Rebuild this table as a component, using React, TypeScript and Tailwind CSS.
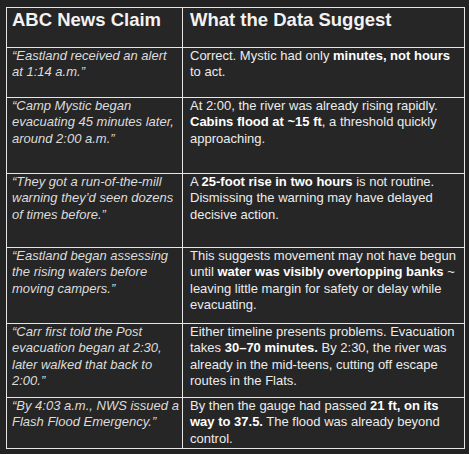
type Row = {
  h: string;
  claim: string[];
  data: React.ReactNode[];
};

const rows: Row[] = [
  {
    h: 'h-[50px]',
    claim: ['“Eastland received an alert', 'at 1:14 a.m.”'],
    data: [
      <>Correct. Mystic had only <b>minutes, not hours</b></>,
      'to act.',
    ],
  },
  {
    h: 'h-[76px]',
    claim: ['“Camp Mystic began', 'evacuating 45 minutes later,', 'around 2:00 a.m.”'],
    data: [
      'At 2:00, the river was already rising rapidly.',
      <><b>Cabins flood at ~15 ft</b>, a threshold quickly</>,
      'approaching.',
    ],
  },
  {
    h: 'h-[74px]',
    claim: ['“They got a run-of-the-mill', 'warning they’d seen dozens', 'of times before.”'],
    data: [
      <>A <b>25-foot rise in two hours</b> is not routine.</>,
      'Dismissing the warning may have delayed',
      'decisive action.',
    ],
  },
  {
    h: 'h-[76px]',
    claim: ['“Eastland began assessing', 'the rising waters before', 'moving campers.”'],
    data: [
      'This suggests movement may not have begun',
      <>until <b>water was visibly overtopping banks</b> ~</>,
      'leaving little margin for safety or delay while',
      'evacuating.',
    ],
  },
  {
    h: 'h-[74px]',
    claim: ['“Carr first told the Post', 'evacuation began at 2:30,', 'later walked that back to', '2:00.”'],
    data: [
      'Either timeline presents problems. Evacuation',
      <>takes <b>30–70 minutes.</b> By 2:30, the river was</>,
      'already in the mid-teens, cutting off escape',
      'routes in the Flats.',
    ],
  },
  {
    h: 'h-[50px]',
    claim: ['“By 4:03 a.m., NWS issued a', 'Flash Flood Emergency.”'],
    data: [
      <>By then the gauge had passed <b>21 ft, on its</b></>,
      <><b>way to 37.5.</b> The flood was already beyond</>,
      'control.',
    ],
  },
];

function Lines({ items }: { items: React.ReactNode[] }) {
  return (
    <>
      {items.map((line, i) => (
        <div key={i} className="whitespace-nowrap">
          {line}
        </div>
      ))}
    </>
  );
}

export default function App() {
  return (
    <div className="h-[454px] w-[469px] bg-[#232323] pl-[6px] pt-[7px] font-['Liberation_Sans',Arial,sans-serif]">
      <div className="w-[459px] border border-[#e6e6e6] bg-[#262626]">
        <div className="flex h-[40px] border-b border-[#e6e6e6] text-[18.5px] font-bold leading-[21px] text-[#f2f2f2]">
          <div className="w-[176px] shrink-0 border-r border-[#e6e6e6] pl-[5px] pt-[1px]">ABC News Claim</div>
          <div className="min-w-0 flex-1 pl-[7px] pt-[1px]">What the Data Suggest</div>
        </div>
        {rows.map((r, i) => (
          <div
            key={i}
            className={`flex ${r.h} ${i < rows.length - 1 ? 'border-b border-[#e6e6e6]' : ''} text-[13px] leading-[16.3px]`}
          >
            <div className="w-[176px] shrink-0 border-r border-[#e6e6e6] pl-[5px] italic text-[#dcdcdc]">
              <Lines items={r.claim} />
            </div>
            <div className="min-w-0 flex-1 pl-[7px] text-[#ececec] [&_b]:font-bold [&_b]:text-white">
              <Lines items={r.data} />
            </div>
          </div>
        ))}
      </div>
    </div>
  );
}
